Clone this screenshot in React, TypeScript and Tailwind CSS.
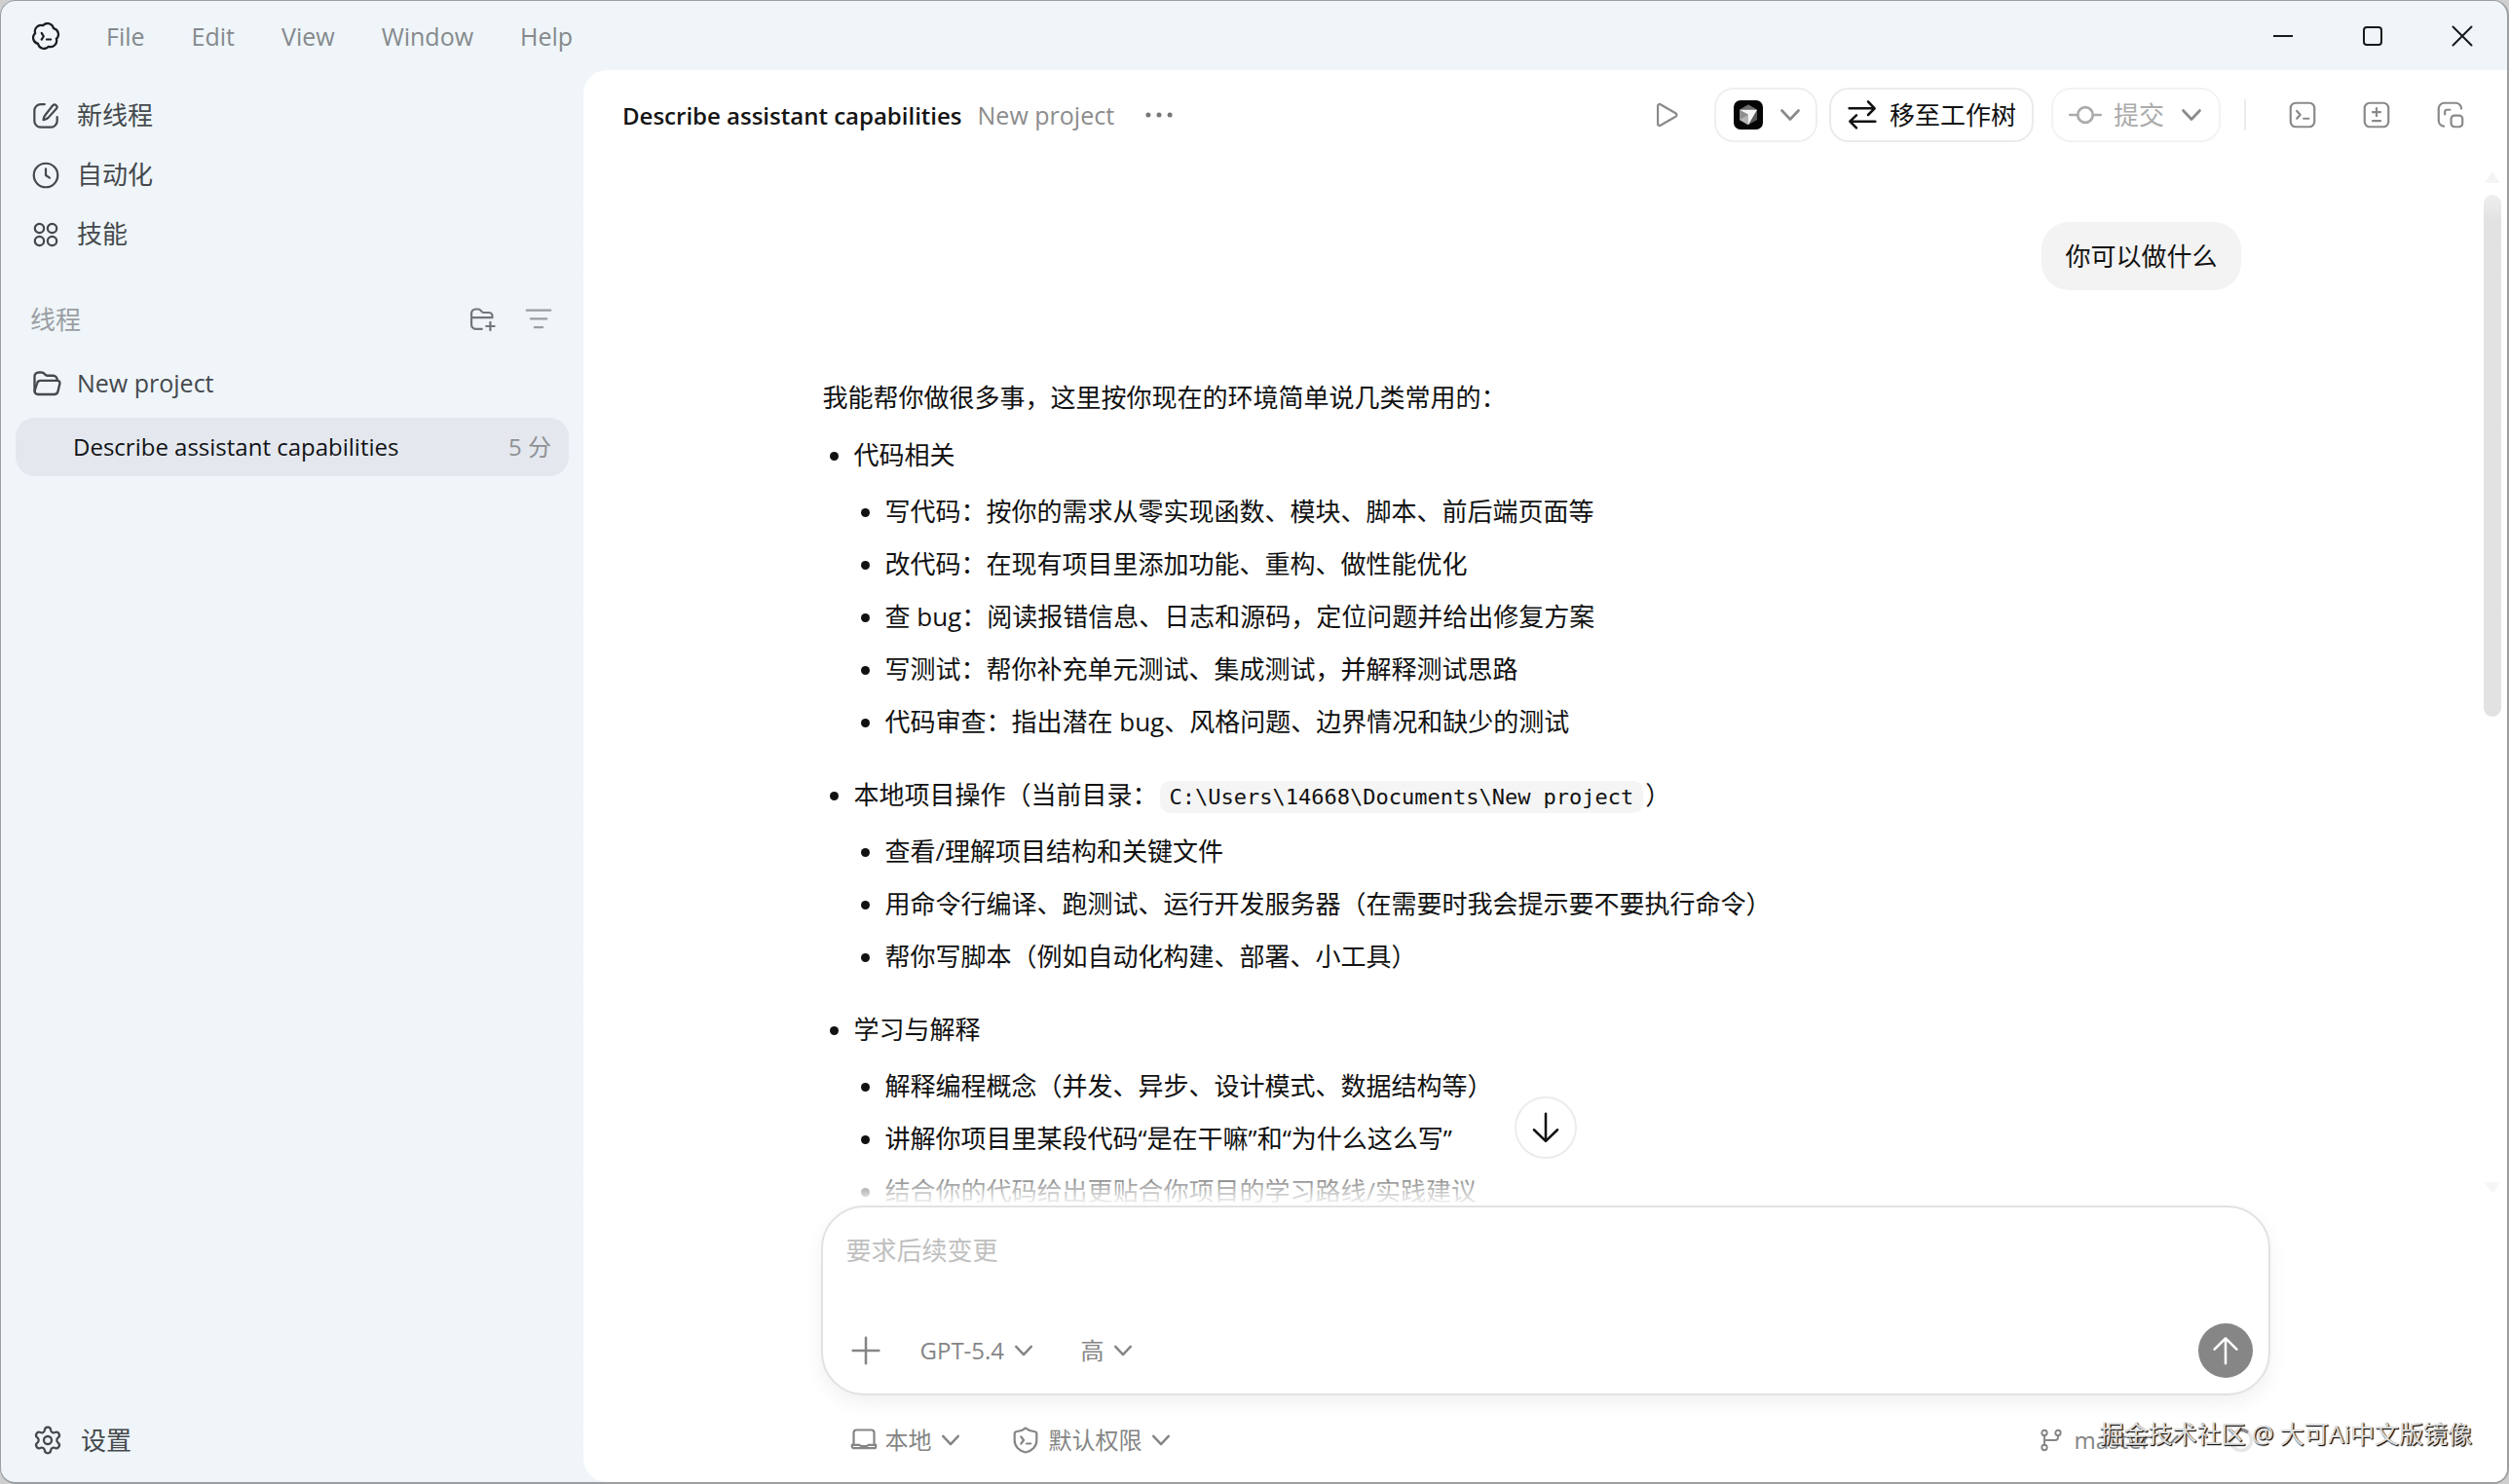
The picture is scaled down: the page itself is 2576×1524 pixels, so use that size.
import { useState } from 'react';
import type { ReactNode } from 'react';
import { Settings } from 'lucide-react';

type IconProps = { className?: string; children: ReactNode };

const Icon = ({ className = 'size-7', children }: IconProps) => (
  <svg
    viewBox="0 0 24 24"
    fill="none"
    stroke="currentColor"
    strokeWidth="1.9"
    strokeLinecap="round"
    strokeLinejoin="round"
    className={`shrink-0 ${className}`}
    aria-hidden="true"
  >
    {children}
  </svg>
);

const Chevron = ({ className = 'size-6' }: { className?: string }) => (
  <Icon className={className}>
    <path d="M3.500 7.500L12 16.500l8.500-9" strokeWidth="2.700" />
  </Icon>
);

const menus = ['File', 'Edit', 'View', 'Window', 'Help'];

const answer = [
  {
    title: '代码相关',
    items: [
      '写代码：按你的需求从零实现函数、模块、脚本、前后端页面等',
      '改代码：在现有项目里添加功能、重构、做性能优化',
      '查 bug：阅读报错信息、日志和源码，定位问题并给出修复方案',
      '写测试：帮你补充单元测试、集成测试，并解释测试思路',
      '代码审查：指出潜在 bug、风格问题、边界情况和缺少的测试',
    ],
  },
  {
    title: '本地项目操作（当前目录：',
    code: 'C:\\Users\\14668\\Documents\\New project',
    tail: '）',
    items: [
      '查看/理解项目结构和关键文件',
      '用命令行编译、跑测试、运行开发服务器（在需要时我会提示要不要执行命令）',
      '帮你写脚本（例如自动化构建、部署、小工具）',
    ],
  },
  {
    title: '学习与解释',
    items: [
      '解释编程概念（并发、异步、设计模式、数据结构等）',
      '讲解你项目里某段代码“是在干嘛”和“为什么这么写”',
      '结合你的代码给出更贴合你项目的学习路线/实践建议',
    ],
  },
];

const TitleBar = () => (
  <div className="flex h-[71px] shrink-0 items-center justify-between pl-8">
    <div className="flex items-center">
      <Icon className="size-7 text-[#1b1d1f]">
        <path d="M21.3 14.5A5.4 5.4 0 0 1 14.5 21.3A5.4 5.4 0 0 1 5.2 18.8A5.4 5.4 0 0 1 2.7 9.5A5.4 5.4 0 0 1 9.5 2.7A5.4 5.4 0 0 1 18.8 5.2A5.4 5.4 0 0 1 21.3 14.5Z" />
        <path d="M8.3 9.3l1.8 2.9-1.8 2.9M12.8 15h3.6" />
      </Icon>
      <nav className="flex gap-12 pl-12 text-[25px] leading-8 text-[#85898c]">
        {menus.map((m) => (
          <button key={m} type="button">{m}</button>
        ))}
      </nav>
    </div>
    <div className="flex text-[#17191b]">
      <button type="button" aria-label="Minimize" className="flex w-[92px] justify-center">
        <Icon className="size-6"><path d="M2 12h20" strokeWidth="2" strokeLinecap="butt" /></Icon>
      </button>
      <button type="button" aria-label="Maximize" className="flex w-[92px] justify-center">
        <Icon className="size-6"><rect x="3" y="3" width="18" height="18" rx="3" strokeWidth="2" /></Icon>
      </button>
      <button type="button" aria-label="Close" className="flex w-[92px] justify-center">
        <Icon className="size-6"><path d="M2.5 2.5l19 19M21.5 2.5l-19 19" strokeWidth="2" /></Icon>
      </button>
    </div>
  </div>
);

const Sidebar = () => (
  <aside className="flex w-[598px] shrink-0 flex-col px-[15px] text-[#45494d]">
    <nav className="flex flex-col gap-1 pt-[18px]">
      <button type="button" className="flex h-[57px] items-center gap-[18px] px-[17px]">
        <Icon>
          <path d="M11 1.8H7.500a5.500 5.500 0 0 0-5.500 5.500V16.500a5.500 5.500 0 0 0 5.500 5.500h9a5.500 5.500 0 0 0 5.500-5.500v-3.500" />
          <path d="M18.200 2.800a2.100 2.100 0 0 1 3 3l-7 7.800c-.9.9-2.400 1.600-4.300 1.900.2-2 .9-3.500 1.700-4.400z" />
        </Icon>
        新线程
      </button>
      <button type="button" className="flex h-[57px] items-center gap-[18px] px-[17px]">
        <Icon>
          <circle cx="12" cy="12" r="10.500" />
          <path d="M12 6.200V12l3.400 2.200" />
        </Icon>
        自动化
      </button>
      <button type="button" className="flex h-[57px] items-center gap-[18px] px-[17px]">
        <Icon>
          <circle cx="6.400" cy="6.400" r="4" />
          <circle cx="17.600" cy="6.400" r="4" />
          <circle cx="6.400" cy="17.600" r="4" />
          <circle cx="17.600" cy="17.600" r="4" />
        </Icon>
        技能
      </button>
    </nav>

    <div className="mt-8 flex h-[54px] items-center justify-between pr-[17px] pl-[15px] text-[#9a9ea2]">
      <h2>线程</h2>
      <div className="flex items-center gap-[30px]">
        <button type="button" aria-label="New folder" className="text-[#72767a]">
          <Icon>
            <path d="M21 10.5V9.2a3.2 3.2 0 0 0-3.2-3.2h-4.6c-2 0-2.2-3-4.6-3H6.2A3.6 3.6 0 0 0 2.6 6.600v10.2a3.6 3.6 0 0 0 3.6 3.6h5.6M2.8 10.3H21M19.2 14.4v7.2M15.6 18h7.2" />
          </Icon>
        </button>
        <button type="button" aria-label="Filter">
          <Icon><path d="M1.500 4h21M5 11.500h14M8.500 19h7" /></Icon>
        </button>
      </div>
    </div>

    <button type="button" className="mt-3 flex h-[54px] items-center gap-4 px-[17px] text-[25px]">
      <Icon className="size-[30px]">
        <path d="M2 18V6a3.200 3.200 0 0 1 3.200-3.200h2.600C10.200 2.800 10.300 5.400 12.500 5.400h4.700A3.400 3.400 0 0 1 20.600 8.800V9.500" />
        <path d="M6.800 9.500h13.900a2 2 0 0 1 2 2.500l-1.500 6.300a3.200 3.200 0 0 1-3.100 2.500H4.700A2.600 2.600 0 0 1 2.200 17.500l2-6.100a2.600 2.600 0 0 1 2.600-1.900z" />
      </Icon>
      New project
    </button>
    <button
      type="button"
      className="mt-2 flex h-[60px] items-center justify-between rounded-[20px] bg-[#e4e8ee] pr-[18px] pl-[59px] text-2xl text-[#111315]"
    >
      Describe assistant capabilities
      <span className="text-[#8d9195]">5 分</span>
    </button>

    <button type="button" className="mt-auto mb-4 flex h-[54px] items-center gap-[18px] px-[17px]">
      <Settings className="size-8" strokeWidth={1.700} />
      设置
    </button>
  </aside>
);

const Header = () => (
  <header className="flex h-[92px] shrink-0 items-center justify-between pr-11 pl-10">
    <div className="flex items-center">
      <h1 className="pt-[2px] text-2xl font-semibold text-[#151515]">Describe assistant capabilities</h1>
      <span className="pt-[2px] pl-4 text-[25px] text-[#8c8c8c]">New project</span>
      <button type="button" aria-label="More" className="pl-8 text-[#777]">
        <Icon>
          <circle cx="2.500" cy="12" r="1.200" fill="currentColor" />
          <circle cx="12" cy="12" r="1.200" fill="currentColor" />
          <circle cx="21.500" cy="12" r="1.200" fill="currentColor" />
        </Icon>
      </button>
    </div>

    <div className="flex items-center text-[#8a8a8a]">
      <button type="button" aria-label="Run" className="mr-[34px]">
        <Icon><path d="M3.500 4v16a1.500 1.500 0 0 0 2.300 1.200l13.400-7.700a1.700 1.700 0 0 0 0-3L5.800 2.800A1.500 1.500 0 0 0 3.500 4z" /></Icon>
      </button>
      <button type="button" aria-label="Open in editor" className="flex h-14 items-center gap-4 rounded-[20px] border-2 border-[#efefef] pr-[14px] pl-[18px]">
        <svg viewBox="0 0 30 30" className="size-[30px]" aria-hidden="true">
          <rect width="30" height="30" rx="7" fill="#050505" />
          <path d="M15 4.500l9 5.200v10.400l-9 5.200-9-5.200V9.700z" fill="#5a5a5a" />
          <path d="M6 9.700h18L15 4.500z" fill="#6f6f6f" />
          <path d="M6 9.700l9 5v10.600l-9-5.200z" fill="#8d8d8d" />
          <path d="M15 14.700v10.600L6 20.100z" fill="#b5b5b5" />
          <path d="M6 9.700h18l-9 15.600V14.700z" fill="#f5f5f5" />
        </svg>
        <Chevron />
      </button>
      <button type="button" className="ml-3 flex h-14 items-center gap-3 rounded-[20px] border-2 border-[#ebebeb] px-4 text-[#111]">
        <Icon className="size-8">
          <path d="M2 7h19M16.500 1.800L21.500 7l-5 5M22 17H3M7.500 12.300L2.500 17l5 5" />
        </Icon>
        移至工作树
      </button>
      <button type="button" className="ml-[18px] flex h-14 items-center rounded-[20px] border-2 border-[#f3f3f3] px-4 text-[#ababab]">
        <Icon className="size-[34px]">
          <circle cx="12" cy="12" r="5.500" />
          <path d="M.9 12h5.600M17.500 12h5.600" />
        </Icon>
        <span className="pr-4 pl-3">提交</span>
        <span className="text-[#8a8a8a]"><Chevron /></span>
      </button>
      <div className="mr-11 ml-6 h-8 w-0.5 bg-[#ececec]" />
      <div className="flex gap-12">
        <button type="button" aria-label="Terminal">
          <Icon>
            <rect x="1.500" y="1.500" width="21" height="21" rx="4.500" />
            <path d="M7 8.500l3 3.300L7 15.200M13 15.200h4.500" />
          </Icon>
        </button>
        <button type="button" aria-label="Diff">
          <Icon>
            <rect x="1.500" y="1.500" width="21" height="21" rx="4.500" />
            <path d="M12 6v7M8.500 9.500h7M8.500 17.300h7" />
          </Icon>
        </button>
        <button type="button" aria-label="Pop out">
          <Icon>
            <path d="M6 22a5 5 0 0 1-4.500-5V6.500a5 5 0 0 1 5-5h10A5 5 0 0 1 21.500 6.500M7 11.500V9.200A1.700 1.700 0 0 1 8.700 7.500H11.500" />
            <rect x="12.500" y="12.500" width="10" height="10" rx="3" />
          </Icon>
        </button>
      </div>
    </div>
  </header>
);

const Conversation = () => (
  <div className="relative flex min-h-0 flex-1">
    <div className="min-w-0 flex-1 overflow-hidden pl-7">
      <div className="mx-auto max-w-[1488px] pt-16 pr-8 leading-[42px] text-[#111]">
        <div className="flex justify-end">
          <p className="rounded-[28px] bg-[#f3f3f3] px-6 py-[14px]">你可以做什么</p>
        </div>
        <p className="mt-[89px]">我能帮你做很多事，这里按你现在的环境简单说几类常用的：</p>
        <ul className="mt-[17px] flex list-disc flex-col gap-[33px] pl-8">
          {answer.map((section) => (
            <li key={section.title}>
              {section.title}
              {section.code && (
                <code className="mx-[2px] rounded-[10px] bg-[#f5f5f5] px-[10px] py-1 font-['DejaVu_Sans_Mono',monospace] text-[22px] leading-8">
                  {section.code}
                </code>
              )}
              {section.tail}
              <ul className="mt-4 flex list-disc flex-col gap-3 pl-8">
                {section.items.map((item) => (
                  <li key={item}>{item}</li>
                ))}
              </ul>
            </li>
          ))}
        </ul>
      </div>
    </div>
    <div className="flex w-6 shrink-0 flex-col items-start justify-between pt-3 pb-3" aria-hidden="true">
      <svg viewBox="0 0 18 12" className="h-3 w-[18px]"><path d="M9 0l8 12H1z" fill="#f4f4f4" /></svg>
      <div className="mt-3 mb-auto h-[51%] w-[18px] rounded-full bg-linear-to-b from-[#efefef] to-[#e2e2e2] to-5%" />
      <svg viewBox="0 0 18 12" className="h-3 w-[18px]"><path d="M9 12L1 0h16z" fill="#f6f6f6" /></svg>
    </div>
    <div className="pointer-events-none absolute right-6 bottom-0 left-0 h-14 bg-linear-to-t from-white to-transparent" />
    <button
      type="button"
      aria-label="Scroll to bottom"
      className="absolute bottom-12 left-1/2 flex size-16 -translate-x-1/2 items-center justify-center rounded-full border-2 border-[#ececec] bg-white text-[#111]"
    >
      <Icon className="size-9"><path d="M12 2.500v18.500M4 13.500l8 7.700 8-7.700" strokeWidth="1.700" /></Icon>
    </button>
  </div>
);

const Picker = ({ label, value, className = '', icon }: { label: string; value: string; className?: string; icon?: ReactNode }) => (
  <label className={`flex items-center text-2xl text-[#858585] ${className}`}>
    {icon}
    <select aria-label={label} className="mr-2 appearance-none bg-transparent outline-none">
      <option>{value}</option>
    </select>
    <Chevron className="size-[22px]" />
  </label>
);

const Composer = () => {
  const [text, setText] = useState('');

  return (
    <form
      onSubmit={(e) => e.preventDefault()}
      className="mx-auto flex h-[195px] w-full max-w-[1488px] shrink-0 flex-col justify-between rounded-[44px] border-2 border-[#e2e2e2] bg-white pt-6 pr-4 pb-4 pl-6 shadow-[0_8px_20px_rgba(0,0,0,0.06)]"
    >
      <textarea
        aria-label="要求后续变更"
        placeholder="要求后续变更"
        rows={1}
        value={text}
        onChange={(e) => setText(e.target.value)}
        className="w-full resize-none bg-transparent leading-10 text-[#111] outline-none placeholder:text-[#c0c0c0]"
      />
      <div className="flex items-center">
        <button type="button" aria-label="Add" className="flex size-10 items-center justify-center text-[#858585]">
          <Icon className="size-8"><path d="M12 2v20M2 12h20" /></Icon>
        </button>
        <Picker label="Model" value="GPT-5.4" className="ml-9" />
        <Picker label="Effort" value="高" className="ml-12" />
        <button type="submit" aria-label="Send" className="ml-auto flex size-14 items-center justify-center rounded-full bg-[#868686] text-white">
          <Icon className="size-8"><path d="M12 22V2.800M3.500 11L12 2.500 20.500 11" /></Icon>
        </button>
      </div>
    </form>
  );
};

const StatusRow = () => (
  <div className="mx-auto flex h-[89px] w-full max-w-[1488px] shrink-0 items-center pt-[2px] pr-4 pl-[30px]">
    <Picker
      label="Location"
      value="本地"
      icon={
        <Icon className="mr-2 size-7 text-[#858585]">
          <rect x="3" y="3" width="18" height="15.500" rx="2.500" />
          <path d="M1.500 16.200h6.500l1.500 1h5l1.500-1h6.500v1.300a1.500 1.500 0 0 1-1.500 1.500H3a1.500 1.500 0 0 1-1.500-1.500z" fill="#fff" />
        </Icon>
      }
    />
    <Picker
      label="Permissions"
      value="默认权限"
      className="ml-[52px]"
      icon={
        <Icon className="mr-[10px] size-7 text-[#858585]">
          <path d="M12 1.300c2.500 2 5.300 3 8 3.200 1 .1 1.700.8 1.700 1.800V12.500c0 5-4.200 9-9.700 10.200C6.500 21.500 2.300 17.500 2.300 12.500V6.300c0-1 .7-1.700 1.700-1.800 2.700-.2 5.500-1.200 8-3.200z" />
          <path d="M8 9l2.300 3L8 15M12.800 15h3.700" />
        </Icon>
      }
    />
    <Picker
      label="Branch"
      value="master"
      className="ml-auto"
      icon={
        <Icon className="mr-3 size-6 text-[#858585]">
          <circle cx="5" cy="4.500" r="2.700" />
          <circle cx="19" cy="4.500" r="2.700" />
          <circle cx="5" cy="19.500" r="2.700" />
          <path d="M5 7.200v9.600M19 7.200V9a3 3 0 0 1-3 3H5" />
        </Icon>
      }
    />
    <Icon className="ml-12 size-7 text-[#e6e6e6]">
      <circle cx="12" cy="12" r="9" strokeWidth="3" />
      <path d="M12 3a9 9 0 0 1 5 1.500" stroke="#8a8a8a" strokeWidth="3" />
    </Icon>
  </div>
);

const App = () => {
  return (
    <div className="h-screen overflow-hidden bg-[#cfcfcf] font-['Open_Sans','Noto_Sans_CJK_SC',sans-serif] text-[26px]">
      <div className="relative flex h-full flex-col overflow-hidden rounded-2xl border border-r-2 border-b-2 border-[#9c9fa2] bg-linear-to-br from-[#eff5f9] from-60% to-[#f0f1f6]">
        <TitleBar />
        <div className="flex min-h-0 flex-1">
          <Sidebar />
          <main className="flex min-w-0 flex-1 flex-col rounded-l-3xl bg-white">
            <Header />
            <Conversation />
            <Composer />
            <StatusRow />
          </main>
        </div>
        <p className="pointer-events-none absolute right-9 bottom-[34px] text-[25px] leading-8 text-[#dedede] [text-shadow:1px_1px_1px_#111,1px_1px_1px_#444]">
          掘金技术社区 @ 大可Ai中文版镜像
        </p>
      </div>
    </div>
  );
};

export default App;
